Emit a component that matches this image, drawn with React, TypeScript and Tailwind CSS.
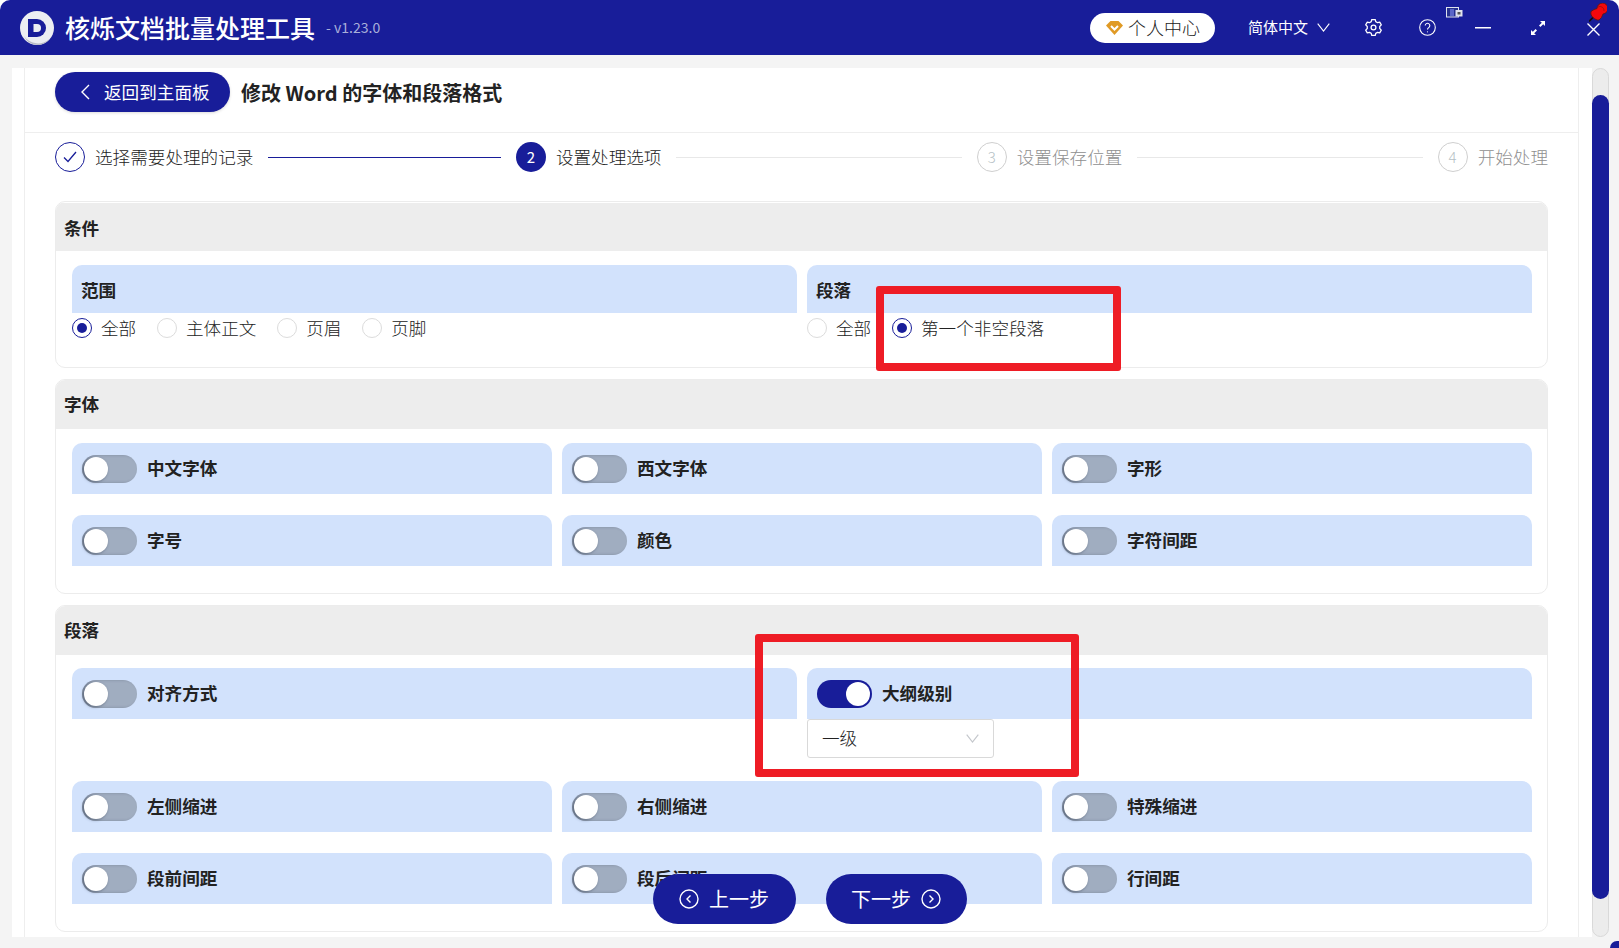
import React from "react";

const FONT = "[font-family:'Noto_Sans_CJK_SC','Noto_Sans',sans-serif]";

function Toggle({ on = false }: { on?: boolean }) {
  return (
    <span
      className={`flex h-[28px] w-[55px] shrink-0 items-center rounded-full px-[1.5px] ${
        on ? "justify-end bg-[#181d99] pr-[2px]" : "justify-start bg-[#a0adc0] shadow-[inset_2px_0_3px_rgba(60,70,90,0.35)]"
      }`}
    >
      <span className={`h-[24px] w-[24px] rounded-full bg-white ${on ? "" : "shadow-[-1px_1px_3px_rgba(40,50,70,0.5)]"}`} />
    </span>
  );
}

function ToggleRow({ label, on = false }: { label: string; on?: boolean }) {
  return (
    <div className="flex h-[51px] items-center gap-[10px] rounded-t-[10px] bg-[#d2e2fc] pl-[10px]">
      <Toggle on={on} />
      <span className="text-[17.6px] font-bold text-[#222]">{label}</span>
    </div>
  );
}

function Radio({ label, on = false }: { label: string; on?: boolean }) {
  return (
    <span className="mr-[20.8px] flex items-center gap-[9px]">
      <span
        className={`flex h-[20px] w-[20px] items-center justify-center rounded-full border bg-white ${
          on ? "border-[#181d99]" : "border-[#dcdcdc]"
        }`}
      >
        {on && <span className="h-[10px] w-[10px] rounded-full bg-[#181d99]" />}
      </span>
      <span className="pt-[1px] text-[17.6px] font-light leading-[20px] text-[#222]">{label}</span>
    </span>
  );
}

function Card({
  title,
  children,
  className = "",
  headerClass = "h-[49px]",
}: {
  title: string;
  children: React.ReactNode;
  className?: string;
  headerClass?: string;
}) {
  return (
    <section className={`overflow-hidden rounded-[10px] border border-[#ececec] ${className}`}>
      <div className={`flex items-center bg-[#ededed] pl-[8px] text-[17.6px] font-bold text-[#222] ${headerClass}`}>{title}</div>
      {children}
    </section>
  );
}

function Step({ n, label, state }: { n: string; label: string; state: "done" | "active" | "todo" }) {
  return (
    <div className="flex shrink-0 items-center gap-[10px]">
      {state === "done" && (
        <span className="flex h-[30px] w-[30px] items-center justify-center rounded-full border border-[#181d99]">
          <svg width="14" height="12" viewBox="0 0 14 12" fill="none" stroke="#181d99" strokeWidth="1.3">
            <path d="M1 6.500 5 10.500 13 1" />
          </svg>
        </span>
      )}
      {state === "active" && (
        <span className="flex h-[30px] w-[30px] items-center justify-center rounded-full bg-[#181d99] text-[15px] text-white">{n}</span>
      )}
      {state === "todo" && (
        <span className="flex h-[30px] w-[30px] items-center justify-center rounded-full border border-[#cfcfcf] text-[15px] font-light text-[#b5bfc5]">{n}</span>
      )}
      <span className={`text-[17.6px] font-light ${state === "todo" ? "text-[#8f8f8f]" : "text-[#222]"}`}>{label}</span>
    </div>
  );
}

function Line({ on = false }: { on?: boolean }) {
  return <div className={`mx-[15px] h-px flex-1 ${on ? "bg-[#181d99]" : "bg-[#e8e8e8]"}`} />;
}

function Logo() {
  return (
    <svg width="34" height="34" viewBox="0 0 34 34">
      <circle cx="17" cy="17" r="17" fill="#eceef2" />
      <path d="M4 25a17 17 0 0 0 26 2.500A15 15 0 0 1 4 25z" fill="#b9bcc6" />
      <path d="M8 8h9a9 9 0 0 1 0 18H8z" fill="#181d99" />
      <path d="M13.500 13H17a4 4 0 0 1 0 8h-3.500z" fill="#eceef2" />
    </svg>
  );
}

function Gem() {
  return (
    <svg width="17" height="14" viewBox="0 0 17 14">
      <path d="M4.500 0h8L17 4.500 8.500 14 0 4.500z" fill="#e09a25" />
      <path d="M5 5l3.500 3.500L12 5" fill="none" stroke="#fff" strokeWidth="2" />
    </svg>
  );
}

function Gear() {
  return (
    <svg width="17" height="17" viewBox="0 0 24 24" fill="none" stroke="#fff" strokeWidth="1.8" strokeLinejoin="round">
      <path d="M9.600 2.200h4.800l.8 3 2.600 1.500 3-.8 2.200 3.900-2.200 2.200v3l2.200 2.200-2.200 3.900-3-.8-2.600 1.500-.8 3H9.600l-.8-3-2.600-1.500-3 .8L1 17.200l2.200-2.200v-3L1 9.800l2.200-3.900 3 .8 2.600-1.500z" transform="translate(0 -1.500)" />
      <circle cx="12" cy="12" r="3.400" />
    </svg>
  );
}

function Help() {
  return (
    <svg width="17" height="17" viewBox="0 0 17 17" fill="none" stroke="#fff" strokeWidth="1.1">
      <circle cx="8.500" cy="8.500" r="7.800" />
      <path d="M6.200 6.600a2.300 2.300 0 1 1 3.500 2c-.8.5-1.200.9-1.200 1.900" />
      <circle cx="8.500" cy="12.800" r=".6" fill="#fff" stroke="none" />
    </svg>
  );
}

function ArrowCircle({ right = false }: { right?: boolean }) {
  return (
    <svg width="20" height="20" viewBox="0 0 20 20" fill="none" stroke="#fff" strokeWidth="1.4">
      <circle cx="10" cy="10" r="9" />
      <path d={right ? "M8.500 6.500 12 10l-3.500 3.500" : "M11.500 6.500 8 10l3.500 3.500"} />
    </svg>
  );
}

export default function App() {
  return (
    <div className={`relative flex h-[948px] w-[1619px] flex-col overflow-hidden bg-white ${FONT}`}>
      <header className="flex h-[55px] shrink-0 items-center rounded-t-[10px] bg-[#181d99] pl-[20px] text-white">
        <Logo />
        <span className="ml-[11px] text-[25px] font-medium leading-none">核烁文档批量处理工具</span>
        <span className="ml-[11px] text-[14px] text-[#a9afd9]">- v1.23.0</span>
        <div className="ml-auto flex items-center">
          <div className="flex h-[30px] w-[125px] items-center gap-[5px] rounded-full bg-white pl-[16px] text-[18px] font-light text-[#222]">
            <Gem />
            <span>个人中心</span>
          </div>
          <span className="ml-[33px] text-[15px]">简体中文</span>
          <svg className="ml-[9px]" width="13" height="9" viewBox="0 0 13 9" fill="none" stroke="#fff" strokeWidth="1.1">
            <path d="M.7.7 6.500 8 12.300.7" />
          </svg>
          <span className="ml-[35px] flex"><Gear /></span>
          <span className="ml-[37px] flex"><Help /></span>
          <svg className="ml-[39px]" width="16" height="2" viewBox="0 0 16 2"><rect width="16" height="1.500" fill="#fff" /></svg>
          <svg className="ml-[40px]" width="14" height="14" viewBox="0 0 14 14" fill="#fff">
            <path d="M14 0v5l-1.800-1.800L9.400 6 8 4.600l2.800-2.800L9 0zM0 14V9l1.800 1.800L4.600 8 6 9.400l-2.800 2.800L5 14z" />
          </svg>
          <svg className="ml-[42px] mr-[19px] mt-[4px]" width="13" height="13" viewBox="0 0 13 13" fill="none" stroke="#fff" strokeWidth="1.4">
            <path d="M.5.500l12 12M12.500.500l-12 12" />
          </svg>
        </div>
      </header>

      {/* tray indicator and pin drawn over the title bar */}
      <svg className="absolute left-[1446px] top-[7px]" width="17" height="11" viewBox="0 0 17 11">
        <rect x=".5" y=".5" width="12" height="9.500" fill="#26308f" stroke="#dfe2ee" />
        <rect x="4" y="2" width="4" height="7" fill="#5a66c8" />
        <rect x="9.500" y="3" width="7" height="6.500" fill="#dfe2ee" />
        <rect x="11.500" y="5" width="3" height="2.500" fill="#555" />
      </svg>
      <svg className="absolute left-[1589px] top-[3px]" width="18" height="19" viewBox="0 0 18 19">
        <path d="M0 18.500 5 13.500" stroke="#111" strokeWidth="1.600" />
        <path d="M2 8.500 5 6.500l3-1a5.500 5.500 0 1 1 6 5.500l-1.500 3.500L10 17c-2 .3-4-.7-6-2.500S1.500 10.500 2 8.500z" fill="#f3080c" stroke="#5b1a1a" strokeWidth=".9" />
        <path d="M9 4a4 4 0 0 1 6 4" fill="none" stroke="#a50a0a" strokeWidth=".8" />
      </svg>

      <div className="flex min-h-0 flex-1 bg-[#f4f4f4] pb-[11px] pl-[12px] pr-[10px] pt-[13px]">
        <main className="min-h-0 flex-1 overflow-hidden bg-white pl-[12px] pr-[13px]">
          <div className="h-full border-x border-[#eeeeee]">
            <div className="flex h-[65px] items-start gap-[11px] border-b border-[#eeeeee] pl-[30px] pt-[4px]">
              <button className="flex h-[40px] w-[175px] items-center rounded-full bg-[#181d99] pl-[25px] text-[17.6px] text-white shadow-[0_1px_3px_rgba(0,0,0,0.15)]">
                <svg width="10" height="16" viewBox="0 0 10 16" fill="none" stroke="#fff" strokeWidth="1.400">
                  <path d="M9 1 2 8l7 7" />
                </svg>
                <span className="ml-[14px]">返回到主面板</span>
              </button>
              <h1 className="mt-[6px] text-[20px] font-bold leading-[30px] text-[#222]">修改 Word 的字体和段落格式</h1>
            </div>

            <div className="px-[30px]">
              <div className="flex items-center pt-[9px]">
                <div className="flex flex-1 items-center">
                  <Step n="1" label="选择需要处理的记录" state="done" />
                  <Line on />
                </div>
                <div className="flex flex-1 items-center">
                  <Step n="2" label="设置处理选项" state="active" />
                  <Line />
                </div>
                <div className="flex flex-1 items-center">
                  <Step n="3" label="设置保存位置" state="todo" />
                  <Line />
                </div>
                <Step n="4" label="开始处理" state="todo" />
              </div>

              <Card title="条件" className="mt-[29px] h-[167px] pt-[1px]" headerClass="h-[48px] pt-[2px]">
                <div className="grid grid-cols-2 gap-[10px] pl-[16px] pr-[15px] pt-[14px]">
                  <div>
                    <div className="flex h-[48px] items-center rounded-t-[10px] bg-[#d2e2fc] pl-[9px] pt-[2px] text-[17.6px] font-bold text-[#222]">范围</div>
                    <div className="flex pt-[4px]">
                      <Radio label="全部" on />
                      <Radio label="主体正文" />
                      <Radio label="页眉" />
                      <Radio label="页脚" />
                    </div>
                  </div>
                  <div>
                    <div className="flex h-[48px] items-center rounded-t-[10px] bg-[#d2e2fc] pl-[9px] pt-[2px] text-[17.6px] font-bold text-[#222]">段落</div>
                    <div className="flex pt-[4px]">
                      <Radio label="全部" />
                      <Radio label="第一个非空段落" on />
                    </div>
                  </div>
                </div>
              </Card>

              <Card title="字体" className="mt-[11px] pb-[27px]">
                <div className="grid grid-cols-3 gap-x-[10px] gap-y-[21px] pl-[16px] pr-[15px] pt-[14px]">
                  {["中文字体", "西文字体", "字形", "字号", "颜色", "字符间距"].map((t) => (
                    <ToggleRow key={t} label={t} />
                  ))}
                </div>
              </Card>

              <Card title="段落" className="mt-[11px] pb-[27px]">
                <div className="grid grid-cols-2 gap-[10px] pl-[16px] pr-[15px] pt-[13px]">
                  <ToggleRow label="对齐方式" />
                  <div>
                    <ToggleRow label="大纲级别" on />
                    <div className="flex h-[39px] w-[187px] items-center justify-between rounded-[3px] border border-[#d9d9d9] bg-white px-[14px] text-[17.6px] font-light text-[#222]">
                      <span>一级</span>
                      <svg width="13" height="9" viewBox="0 0 13 9" fill="none" stroke="#c4c7cc" strokeWidth="1.200">
                        <path d="M.7.700 6.500 8 12.300.700" />
                      </svg>
                    </div>
                  </div>
                </div>
                <div className="mt-[23px] grid grid-cols-3 gap-x-[10px] gap-y-[21px] pl-[16px] pr-[15px]">
                  {["左侧缩进", "右侧缩进", "特殊缩进", "段前间距", "段后间距", "行间距"].map((t) => (
                    <ToggleRow key={t} label={t} />
                  ))}
                </div>
              </Card>
            </div>
          </div>
        </main>
        <div className="relative w-[17px] shrink-0 rounded-full border border-[#d9d9d9] bg-[#ececec]">
          <div className="absolute left-[-1px] right-[-1px] top-[26px] h-[804px] rounded-full bg-[#181d99]" />
        </div>
      </div>

      {/* floating step buttons */}
      <div className="absolute left-0 right-0 top-[874px] flex justify-center gap-[30px]">
        <button className="flex h-[50px] w-[143px] items-center justify-center gap-[10px] rounded-full bg-[#181d99] text-[20px] text-white">
          <ArrowCircle />
          <span>上一步</span>
        </button>
        <button className="flex h-[50px] w-[141px] items-center justify-center gap-[10px] rounded-full bg-[#181d99] text-[20px] text-white">
          <span>下一步</span>
          <ArrowCircle right />
        </button>
      </div>

      {/* annotation rectangles */}
      <div className="absolute left-[876px] top-[286px] h-[85px] w-[245px] rounded-[3px] border-[8px] border-[#ee1c25]" />
      <div className="absolute left-[755px] top-[634px] h-[143px] w-[324px] rounded-[3px] border-[8px] border-[#ee1c25]" />

      {/* bottom-right window corner */}
      <div className="absolute bottom-0 right-0 h-[7px] w-[9px] rounded-tl-[9px] bg-[#181d99]" />
    </div>
  );
}
